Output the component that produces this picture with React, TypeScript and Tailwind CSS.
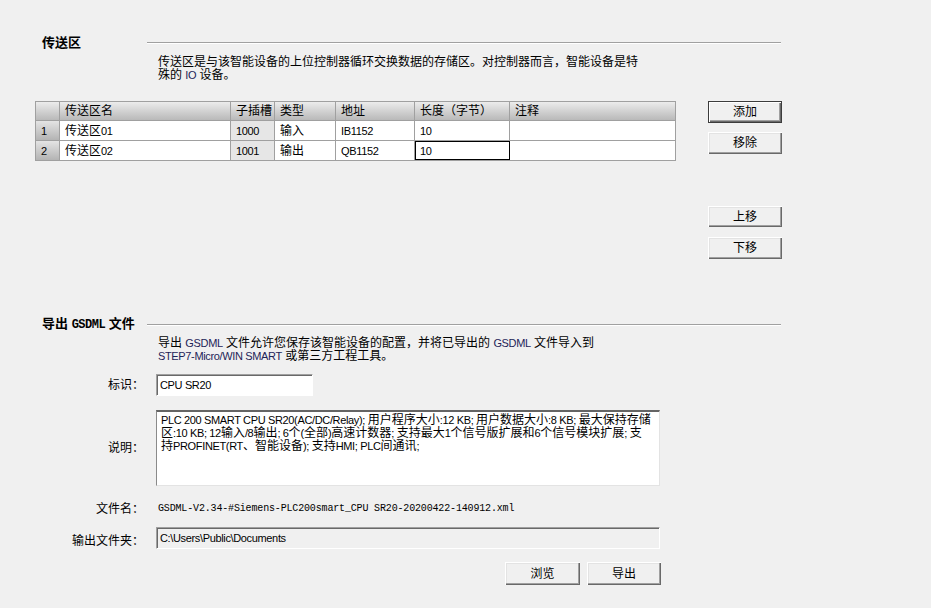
import React from "react";

const FONT = '"Liberation Sans", "Noto Sans CJK SC", sans-serif';

function T({ s, lat = "" }: { s: string; lat?: string }) {
  const parts = s.split(/([\u3000-\u303f\u3400-\u9fff\uff00-\uffef、]+)/);
  return (
    <>
      {parts.map((p, i) =>
        p === "" ? null : /[\u3000-\u303f\u3400-\u9fff\uff00-\uffef、]/.test(p) ? (
          <span key={i}>{p}</span>
        ) : (
          <span key={i} className={`text-[11px] tracking-[-0.35px] ${lat}`}>
            {p}
          </span>
        )
      )}
    </>
  );
}

function Btn({ label, def, w = "w-[74px]", h = "h-[22px]" }: { label: string; def?: boolean; w?: string; h?: string }) {
  return (
    <div
      className={`${w} ${h} flex items-center justify-center text-[12px] leading-[14px] bg-[#f0f0f0] ${
        def
          ? "border border-[#3c3c3c] shadow-[inset_1px_1px_0_#fff,inset_-1px_-1px_0_#696969,inset_-2px_-2px_0_#a0a0a0]"
          : "shadow-[inset_1px_1px_0_#fff,inset_-1px_-1px_0_#696969,inset_-2px_-2px_0_#a0a0a0,inset_2px_2px_0_#e3e3e3]"
      }`}
    >
      {label}
    </div>
  );
}

const cols = [24, 171, 44, 61, 79, 95, 165];

function Cell({ w, children, cls = "" }: { w: number; children?: React.ReactNode; cls?: string }) {
  return (
    <div style={{ width: w }} className={`h-[19px] flex items-center pl-[5px] border-r border-[#a0a0a0] last:border-r-0 shrink-0 ${cls}`}>
      {children}
    </div>
  );
}

export default function App() {
  const rows = [
    ["1", "传送区01", "1000", "输入", "IB1152", "10", ""],
    ["2", "传送区02", "1001", "输出", "QB1152", "10", ""],
  ];
  const blue = "text-[#1e2458]";
  return (
    <div className="w-[931px] h-[608px] bg-[#f0f0f0] overflow-hidden text-black text-[12px]" style={{ fontFamily: FONT }}>
      {/* Section 1 heading */}
      <div className="flex items-center pt-[36px] pl-[42px] w-[781px]">
        <div className="w-[105px] text-[13px] font-bold leading-[14px]">传送区</div>
        <div className="flex-1 h-[2px] border-t border-[#a0a0a0] border-b border-b-white" />
      </div>
      <div className="ml-[158px] mt-[6px] leading-[13px] w-[490px]">
        <div>传送区是与该智能设备的上位控制器循环交换数据的存储区。对控制器而言，智能设备是特</div>
        <div>
          殊的 <T s="IO" lat={blue} /> 设备。
        </div>
      </div>

      {/* table + buttons */}
      <div className="flex items-start mt-[19px]">
        <div className="ml-[35px] w-[641px] border border-[#a0a0a0] bg-white leading-[14px]">
          <div className="flex border-b border-[#a0a0a0] bg-gradient-to-b from-[#ececec] to-[#b9b9b9]">
            {["", "传送区名", "子插槽", "类型", "地址", "长度（字节）", "注释"].map((t, i) => (
              <Cell key={i} w={cols[i]} cls="!h-[18px]">
                {t}
              </Cell>
            ))}
          </div>
          {rows.map((r, ri) => (
            <div key={ri} className={`flex ${ri === 0 ? "border-b border-[#a0a0a0]" : ""}`}>
              {r.map((t, i) => (
                <Cell
                  key={i}
                  w={cols[i]}
                  cls={
                    i === 0
                      ? "bg-gradient-to-b from-[#e4e4e4] to-[#b4b4b4]"
                      : i === 2
                      ? "bg-[#e6e6e6]"
                      : i === 5 && ri === 1
                      ? "outline outline-1 outline-black -outline-offset-1"
                      : ""
                  }
                >
                  <T s={t} />
                </Cell>
              ))}
            </div>
          ))}
        </div>
        <div className="ml-[32px] flex flex-col">
          <Btn label="添加" def />
          <div className="mt-[9px]">
            <Btn label="移除" />
          </div>
          <div className="mt-[52px]">
            <Btn label="上移" h="h-[21px]" />
          </div>
          <div className="mt-[10px]">
            <Btn label="下移" />
          </div>
        </div>
      </div>

      {/* Section 2 heading */}
      <div className="flex items-center mt-[58px] pl-[42px] w-[781px]">
        <div className="w-[105px] text-[13px] font-bold leading-[14px] whitespace-nowrap">
          导出 <span style={{ fontFamily: '"Liberation Mono", monospace' }} className="text-[12px] tracking-[-0.5px]">GSDML</span> 文件
        </div>
        <div className="flex-1 h-[2px] border-t border-[#a0a0a0] border-b border-b-white" />
      </div>
      <div className="ml-[158px] mt-[5px] leading-[13px] w-[460px] whitespace-nowrap">
        <div>
          导出 <T s="GSDML" lat={blue} /> 文件允许您保存该智能设备的配置，并将已导出的 <T s="GSDML" lat={blue} /> 文件导入到
        </div>
        <div>
          <T s="STEP7-Micro/WIN SMART" lat={blue} /> 或第三方工程工具。
        </div>
      </div>

      {/* form */}
      <div className="flex items-center mt-[11px]">
        <div className="w-[144px] text-right leading-[14px]">标识：</div>
        <div className="ml-[12px] w-[157px] h-[22px] bg-white border-t border-l border-[#a0a0a0] border-b border-r border-b-white border-r-white shadow-[inset_1px_1px_0_#696969] flex items-center pl-[3px] leading-[14px]">
          <T s="CPU SR20" />
        </div>
      </div>

      <div className="flex items-center mt-[14px]">
        <div className="w-[144px] text-right leading-[14px]">说明：</div>
        <div className="ml-[12px] w-[504px] h-[76px] bg-white border-t-2 border-l border-[#8a8a8a] border-t-[#646464] border-b border-r border-b-[#e3e3e3] border-r-[#e3e3e3] pl-[4px] pt-[2px] leading-[13px] whitespace-nowrap">
          <div>
            <T s="PLC 200 SMART CPU SR20(AC/DC/Relay); 用户程序大小:12 KB; 用户数据大小:8 KB; 最大保持存储" />
          </div>
          <div>
            <T s="区:10 KB; 12输入/8输出; 6个(全部)高速计数器; 支持最大1个信号版扩展和6个信号模块扩展; 支" />
          </div>
          <div>
            <T s="持PROFINET(RT、智能设备); 支持HMI; PLC间通讯;" />
          </div>
        </div>
      </div>

      <div className="flex items-center mt-[16px] h-[14px]">
        <div className="w-[144px] text-right leading-[14px]">文件名：</div>
        <div
          className="ml-[14px] text-[10px] leading-[14px] tracking-[-0.16px] whitespace-nowrap"
          style={{ fontFamily: '"Liberation Mono", monospace' }}
        >
          GSDML-V2.34-#Siemens-PLC200smart_CPU SR20-20200422-140912.xml
        </div>
      </div>

      <div className="flex items-center mt-[11px]">
        <div className="w-[144px] text-right leading-[14px] pt-[6px]">输出文件夹：</div>
        <div className="ml-[12px] w-[504px] h-[22px] bg-[#f0f0f0] border-t border-l border-[#a0a0a0] border-b border-r border-b-white border-r-white shadow-[inset_1px_1px_0_#696969] flex items-center pl-[3px] leading-[14px]">
          <T s="C:\Users\Public\Documents" />
        </div>
      </div>

      <div className="flex mt-[13px] ml-[505px] gap-[7px]">
        <Btn label="浏览" w="w-[75px]" h="h-[23px]" />
        <Btn label="导出" w="w-[74px]" h="h-[23px]" />
      </div>
    </div>
  );
}
